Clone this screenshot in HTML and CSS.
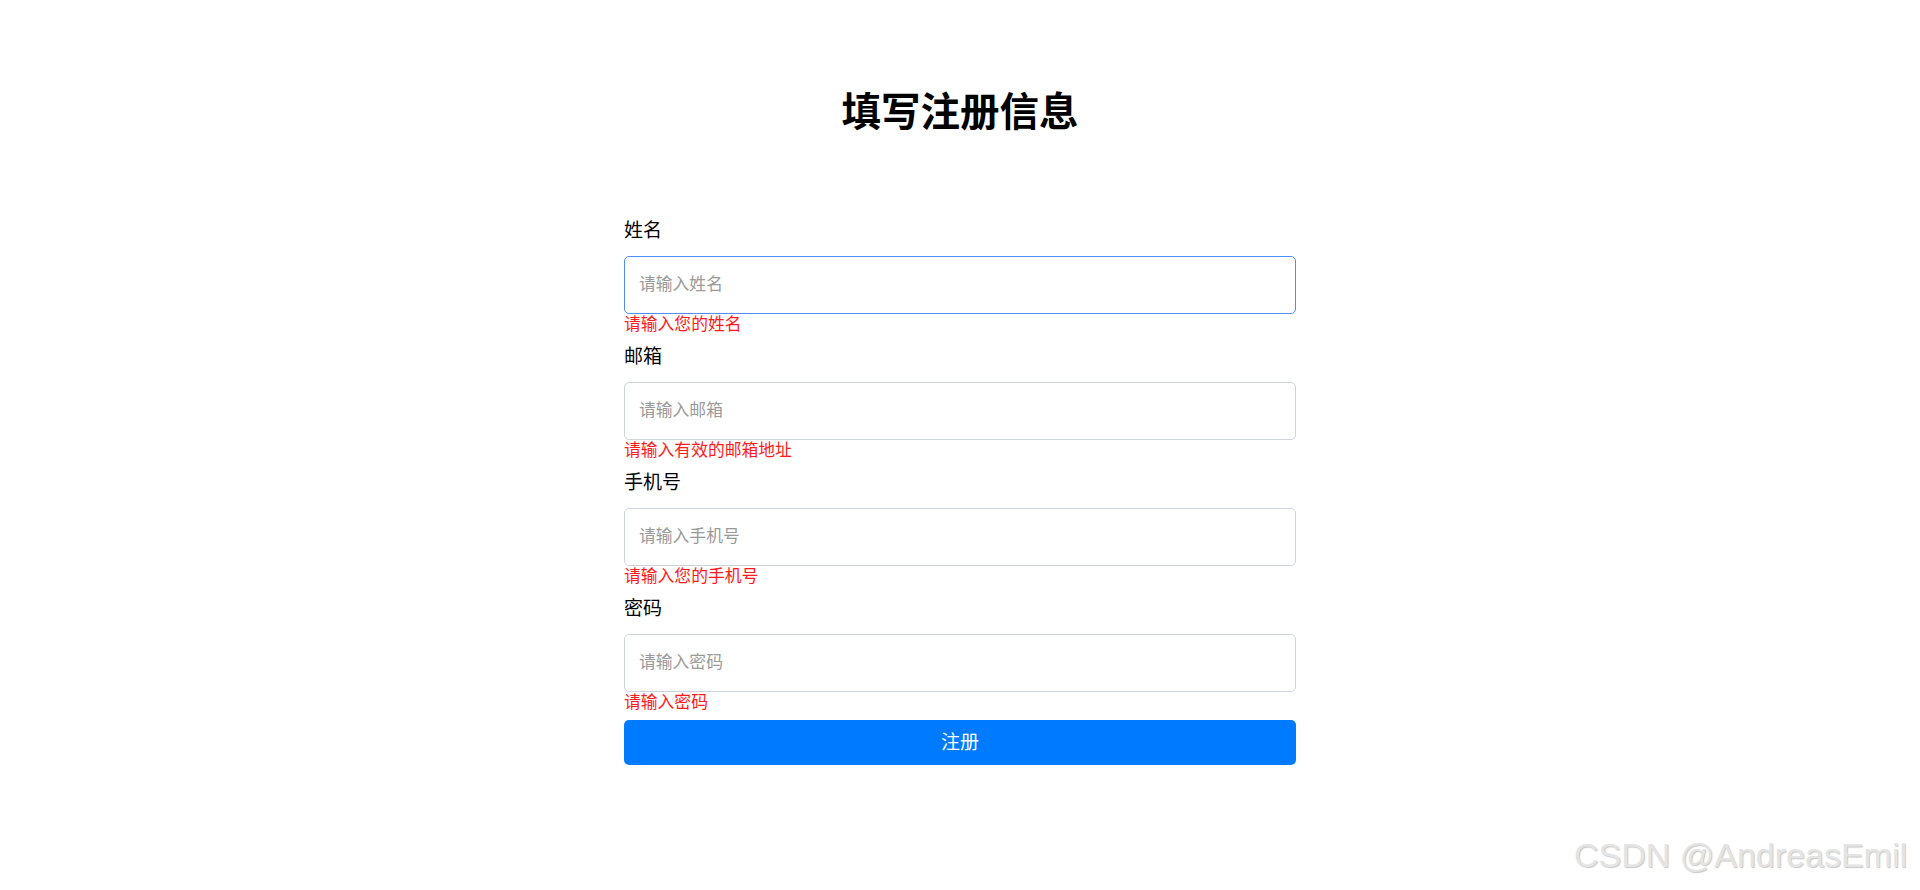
FILE: index.html
```html
<!DOCTYPE html>
<html lang="zh-CN">
<head>
<meta charset="UTF-8">
<title>填写注册信息</title>
<link rel="stylesheet" href="styles.css">
</head>
<body>
<main class="page">
  <h1 class="title">填写注册信息</h1>
  <form class="form" onsubmit="return false;">
    <div class="fields">
      <div class="group">
        <label class="label" for="name">姓名</label>
        <input class="input is-focused" id="name" type="text" placeholder="请输入姓名">
        <div class="error">请输入您的姓名</div>
      </div>
      <div class="group">
        <label class="label" for="email">邮箱</label>
        <input class="input" id="email" type="text" placeholder="请输入邮箱">
        <div class="error">请输入有效的邮箱地址</div>
      </div>
      <div class="group">
        <label class="label" for="phone">手机号</label>
        <input class="input" id="phone" type="text" placeholder="请输入手机号">
        <div class="error">请输入您的手机号</div>
      </div>
      <div class="group">
        <label class="label" for="pwd">密码</label>
        <input class="input" id="pwd" type="password" placeholder="请输入密码">
        <div class="error">请输入密码</div>
      </div>
    </div>
    <button class="submit" type="submit">注册</button>
  </form>
</main>
<div class="watermark">CSDN @AndreasEmil</div>
</body>
</html>
```
FILE: styles.css
```css
* {
  box-sizing: border-box;
}

html, body {
  margin: 0;
  padding: 0;
  background: #ffffff;
}

body {
  font-family: "Noto Sans CJK SC", "Noto Sans", sans-serif;
  color: #000000;
  min-height: 890px;
  position: relative;
}

.page {
  display: flex;
  flex-direction: column;
  align-items: center;
  padding-top: 86px;
}

.title {
  margin: 0 0 86px;
  font-size: 39.5px;
  line-height: 46px;
  font-weight: 700;
  text-align: center;
}

.form {
  width: 672px;
  display: flex;
  flex-direction: column;
}

.fields {
  display: flex;
  flex-direction: column;
  gap: 12px;
}

.group {
  display: flex;
  flex-direction: column;
}

.label {
  display: block;
  font-size: 19px;
  line-height: 21px;
  margin-bottom: 17px;
}

.input {
  display: block;
  width: 100%;
  height: 58px;
  padding: 0 14px 4px;
  border: 1px solid #ced4da;
  border-radius: 5px;
  font-family: inherit;
  font-size: 16.8px;
  color: #333;
  outline: none;
  background: #fff;
}

.input::placeholder {
  color: #9a9a9a;
}

.input.is-focused {
  border-color: #4d8ef7;
}

.error {
  font-size: 16.8px;
  line-height: 18px;
  color: #ff1a1a;
}

.submit {
  margin-top: 10px;
  height: 45px;
  width: 100%;
  padding: 0 0 4px;
  border: none;
  border-radius: 5px;
  background: #007bff;
  color: #ffffff;
  font-family: inherit;
  font-size: 19px;
  cursor: pointer;
}

.watermark {
  position: absolute;
  right: 13px;
  bottom: 16px;
  font-family: "Liberation Sans", Arial, sans-serif;
  font-size: 34px;
  line-height: 38px;
  color: #e4e4e4;
  text-shadow: 1px 1px 1px rgba(0, 0, 0, 0.22);
  pointer-events: none;
}
```
